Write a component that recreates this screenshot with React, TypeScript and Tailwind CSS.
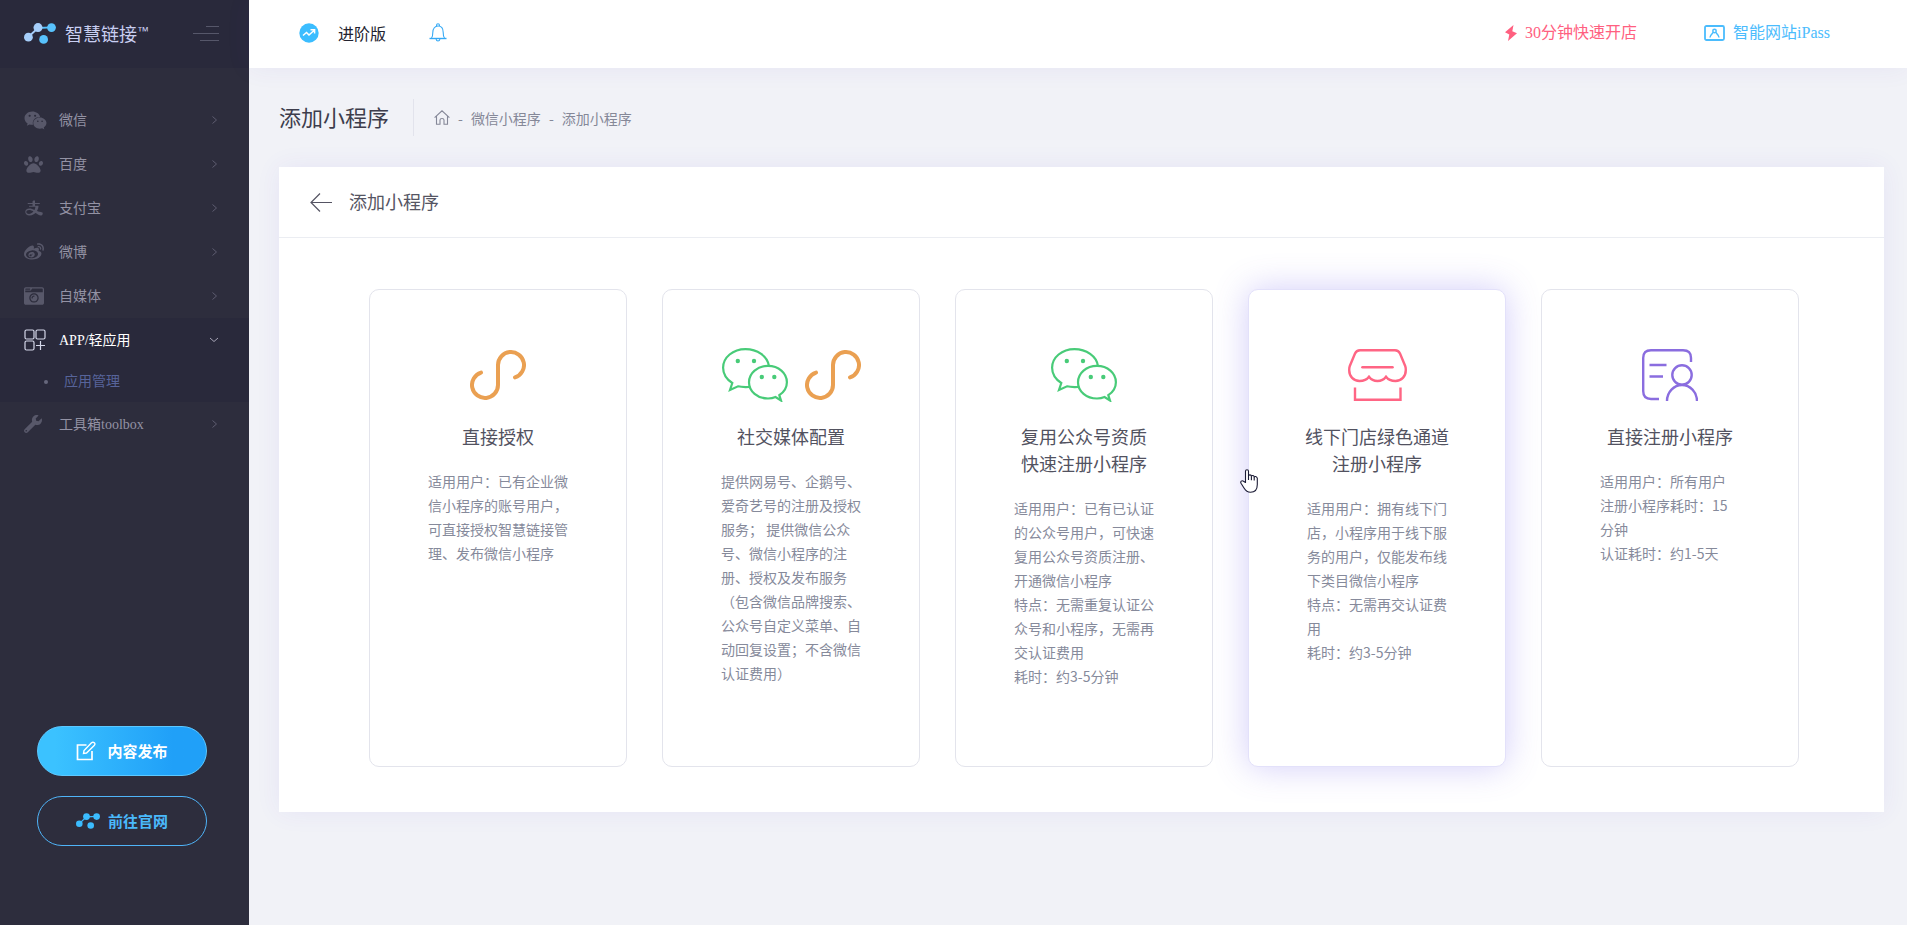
import type { ReactNode } from "react";
import { FaWeixin, FaPaw, FaWeibo, FaCameraRetro, FaWrench } from "react-icons/fa";
import { AiOutlineAlipay } from "react-icons/ai";
import clsx from "clsx";

function LogoMark({ className, left, right }: { className: string; left: string; right: string }) {
  return (
    <svg viewBox="0 0 32 21" className={className} aria-hidden="true">
      <path d="M4.3 14 L14 5" stroke={left} strokeWidth="1.8" />
      <path d="M14 5 L27.5 4.3" stroke={right} strokeWidth="1.8" />
      <circle cx="4.4" cy="14.2" r="4.4" fill={left} />
      <circle cx="14" cy="4.6" r="4.5" fill={left} />
      <circle cx="27.5" cy="4.6" r="4.4" fill={right} />
      <circle cx="19.6" cy="16.4" r="4.4" fill={right} />
    </svg>
  );
}

function GridPlusIcon({ className }: { className?: string }) {
  return (
    <svg viewBox="0 0 22 22" className={className} fill="none" stroke="currentColor" strokeWidth="1.2">
      <rect x="1" y="1" width="9" height="9" rx="1.5" />
      <rect x="12" y="1" width="9" height="9" rx="1.5" />
      <rect x="1" y="12" width="9" height="9" rx="1.5" />
      <path d="M16.5 12v9M12 16.5h9" />
    </svg>
  );
}

function Chevron({ open }: { open?: boolean }) {
  return (
    <svg
      viewBox="0 0 10 10"
      className={clsx("h-2.5 w-2.5", open ? "text-[#a5a3b5]" : "text-[#5d5c70]")}
      fill="none"
      stroke="currentColor"
      strokeWidth="1"
    >
      {open ? <path d="M1 3l4 3.5L9 3" /> : <path d="M3.500 1.500l4 3.500-4 3.500" />}
    </svg>
  );
}

function BellIcon() {
  return (
    <svg viewBox="0 0 18 19" className="h-[19px] w-[18px]" fill="none" stroke="#35a9f5" strokeWidth="1.1">
      <path d="M.5 15.5h17" strokeWidth="1.4" />
      <path d="M2.5 15c1-1.2 1.3-2.500 1.300-5.500C3.800 5.500 6 3 9 3s5.200 2.500 5.200 6.500c0 3 .3 4.300 1.300 5.500" />
      <path d="M7.600 3.100V2Q7.600.7 9 .7T10.400 2v1.100M7 15.700q.3 2.300 2 2.300t2-2.300" />
    </svg>
  );
}

function WechatIcon() {
  return (
    <svg viewBox="0 0 66 54" className="h-[54px] w-[66px]" fill="none" stroke="#48cb78" strokeWidth="2.200">
      <path d="M46.800 17.500C45.500 8.500 35.500 1.100 23.500 1.100C11 1.100 1.100 9.300 1.100 19.700C1.100 26 5 31.500 10.300 35L8 42L16 38.300C19.500 39.300 23 39.200 27.200 39" />
      <path d="M57.300 47.200C62 44 64.900 39.500 64.900 34.200C64.900 25 56.500 17.800 46 17.800S27 25 27 34.200C27 43.500 35.500 50.500 46 50.500C48.700 50.500 51.300 50 53.500 49L59 52.500Z" />
      <g fill="#48cb78" stroke="none">
        <circle cx="15.800" cy="13" r="2.200" />
        <circle cx="32" cy="13" r="2.200" />
        <circle cx="39.800" cy="29" r="2.200" />
        <circle cx="52.300" cy="29" r="2.200" />
      </g>
    </svg>
  );
}

function MiniProgramIcon() {
  return (
    <svg viewBox="0 0 56 50" className="h-[50px] w-14" fill="none" stroke="#eaa052" strokeWidth="4" strokeLinecap="round">
      <path d="M45 27.400A13 13 0 1 0 28 15V35A13 13 0 1 1 11 22.600" />
    </svg>
  );
}

function StoreIcon() {
  return (
    <svg viewBox="0 0 59 52" className="h-[52px] w-[59px]" fill="none" stroke="#ff6584" strokeWidth="2.400">
      <path d="M12 1.200H47Q50.500 1.200 52 4.500L57.200 17Q57.800 18.500 57.800 21C57.800 27.500 53.500 32 47.500 32C43.500 32 40 30.500 38 27.800C36 30.500 33 32 29.500 32S23 30.500 21 27.800C19 30.500 15.500 32 11.500 32C5.500 32 1.200 27.500 1.200 21Q1.200 18.500 1.800 17L7 4.500Q8.500 1.200 12 1.200Z" />
      <path d="M14.500 18.300h30" strokeWidth="2.600" strokeLinecap="round" />
      <path d="M7 38.500V50.800H52.500V38.500" />
    </svg>
  );
}

function RegisterIcon() {
  return (
    <svg viewBox="0 0 56 52" className="h-[52px] w-14" fill="none" stroke="#8a6ddf" strokeWidth="2.400">
      <path d="M49 13V9Q49 1.200 41 1.200H9Q1.200 1.200 1.200 9V42Q1.200 50 9 50H17" />
      <path d="M7.500 16h17M7.500 27.500h13.500" />
      <circle cx="40" cy="26" r="9.700" />
      <path d="M25 52C25 43 32 36 40 36S55 43 55 52" />
    </svg>
  );
}

function HandCursor() {
  return (
    <svg
      viewBox="0 0 18 24"
      className="pointer-events-none absolute -left-[9px] top-[179px] h-6 w-[18px]"
      fill="#fff"
      stroke="#1b1b35"
      strokeWidth="1.100"
      strokeLinejoin="round"
    >
      <path d="M5.500 13.500V2.200Q5.500.7 7 .7T8.500 2.200V7Q8.700 5.800 10 5.900T11.400 7.200Q11.800 6.300 12.900 6.500T14.200 8Q14.600 7.300 15.700 7.500T17.300 9.200V15.500C17.300 20.500 14.500 23.300 10.500 23.300C7 23.300 5.500 21.500 4 19L1 14.200Q.3 12.800 1.300 12.100T3.500 12.200Z" />
      <path d="M8.500 7v4M11.400 7.200v4M14.200 8v3.500" fill="none" />
    </svg>
  );
}

const menu = [
  { name: "微信", icon: FaWeixin, size: "h-[23px] w-[23px]" },
  { name: "百度", icon: FaPaw, size: "h-[19px] w-[19px]" },
  { name: "支付宝", icon: AiOutlineAlipay, size: "h-5 w-5" },
  { name: "微博", icon: FaWeibo, size: "h-5 w-5" },
  { name: "自媒体", icon: FaCameraRetro, size: "h-5 w-5" },
  { name: "APP/轻应用", icon: GridPlusIcon, size: "h-[22px] w-[22px]", active: true, children: ["应用管理"] },
  { name: "工具箱toolbox", icon: FaWrench, size: "h-[18px] w-[18px]" },
];

type Option = { title: string[]; lines: string[]; icons: ReactNode; active?: boolean };

const options: Option[] = [
  {
    title: ["直接授权"],
    lines: ["适用用户：已有企业微信小程序的账号用户，可直接授权智慧链接管理、发布微信小程序"],
    icons: <MiniProgramIcon />,
  },
  {
    title: ["社交媒体配置"],
    lines: [
      "提供网易号、企鹅号、爱奇艺号的注册及授权服务； 提供微信公众号、微信小程序的注册、授权及发布服务（包含微信品牌搜索、公众号自定义菜单、自动回复设置；不含微信认证费用）",
    ],
    icons: (
      <>
        <WechatIcon />
        <MiniProgramIcon />
      </>
    ),
  },
  {
    title: ["复用公众号资质", "快速注册小程序"],
    lines: [
      "适用用户：已有已认证的公众号用户，可快速复用公众号资质注册、开通微信小程序",
      "特点：无需重复认证公众号和小程序，无需再交认证费用",
      "耗时：约3-5分钟",
    ],
    icons: <WechatIcon />,
  },
  {
    title: ["线下门店绿色通道", "注册小程序"],
    lines: [
      "适用用户：拥有线下门店，小程序用于线下服务的用户，仅能发布线下类目微信小程序",
      "特点：无需再交认证费用",
      "耗时：约3-5分钟",
    ],
    icons: <StoreIcon />,
    active: true,
  },
  {
    title: ["直接注册小程序"],
    lines: ["适用用户：所有用户", "注册小程序耗时：15分钟", "认证耗时：约1-5天"],
    icons: <RegisterIcon />,
  },
];

function Sidebar() {
  return (
    <aside className="flex w-[249px] shrink-0 flex-col bg-[#2d2d3d]">
      <div className="flex h-[68px] items-center bg-[#29293b] pb-0.5 pl-6 pr-[30px]">
        <LogoMark className="h-[21px] w-8" left="#a6cefa" right="#58c2fd" />
        <div className="ml-[9px] flex text-[18px] leading-6 text-[#c9cff2]">
          智慧链接<span className="font-['Liberation_Sans'] text-xs leading-5">™</span>
        </div>
        <button type="button" aria-label="收起菜单" className="ml-auto flex flex-col items-end gap-1.5">
          <span className="h-px w-[13px] bg-[#56576a]" />
          <span className="h-px w-[26px] bg-[#56576a]" />
          <span className="h-px w-[19px] bg-[#56576a]" />
        </button>
      </div>

      <nav className="mt-[30px] flex-1 font-['Liberation_Serif','Noto_Sans_CJK_SC',serif] text-sm">
        {menu.map(item => (
          <div key={item.name} className={clsx(item.active && "bg-[#29293b]")}>
            <a
              href="#"
              className={clsx("flex h-11 items-center pl-6 pr-[30px]", item.active ? "text-white" : "text-[#9392a4]")}
            >
              <span className="flex w-[35px] shrink-0">
                <item.icon className={clsx(item.size, item.active ? "text-[#d5d8ea]" : "text-[#58586a]")} />
              </span>
              <span className="flex-1 pt-0.5">{item.name}</span>
              <Chevron open={item.active} />
            </a>
            {item.children?.map(child => (
              <a key={child} href="#" className="flex h-10 items-center pl-11 text-[#57649a]">
                <span className="mr-4 h-1 w-1 rounded-full bg-[#66677c]" />
                {child}
              </a>
            ))}
          </div>
        ))}
      </nav>

      <div className="flex flex-col gap-5 pb-[79px] pl-[37px] pr-[42px] text-[15px] font-bold">
        <button
          type="button"
          className="flex h-[50px] items-center justify-center gap-[11px] rounded-full border border-[#5cc8ff] bg-linear-to-r from-[#3bc2ff] from-10% to-[#20a0f8] to-80% text-white"
        >
          <svg viewBox="0 0 20 20" className="h-5 w-5" fill="none" stroke="currentColor" strokeWidth="1.700">
            <path d="M10.500 4H1.500V18.500H16V10" />
            <path d="M7.500 12.500L8 9.500L15.500 1.700Q17 .6 18.300 1.800T18.200 4.400L10.500 12Z" strokeWidth="1.400" />
          </svg>
          内容发布
        </button>
        <button
          type="button"
          className="flex h-[50px] items-center justify-center gap-2 rounded-full border border-[#4fb4f9] text-[#4ab9fb]"
        >
          <LogoMark className="h-4 w-6" left="#3bbcff" right="#3bbcff" />
          前往官网
        </button>
      </div>
    </aside>
  );
}

function TopBar() {
  return (
    <header className="relative flex h-[68px] items-center bg-white pb-0.5 pl-[50px] pr-[77px] shadow-[0_0_26px_rgba(82,63,180,0.07)]">
      <svg viewBox="0 0 20 20" className="h-5 w-5" aria-hidden="true">
        <circle cx="10" cy="10" r="9.700" fill="#3bbdff" />
        <path d="M4 12.500l3.500-3 2.500 2.500 5-4.500M11.500 6.800H15.600V10.500" fill="none" stroke="#fff" strokeWidth="1.500" />
      </svg>
      <span className="ml-[19px] text-base text-[#22222e]">进阶版</span>
      <button type="button" aria-label="通知" className="ml-[43px] pb-0.5">
        <BellIcon />
      </button>
      <div className="ml-auto flex gap-[67px] font-['Liberation_Serif','Noto_Sans_CJK_SC',serif] text-base">
        <a href="#" className="flex items-center gap-2 text-[#ff6080]">
          <svg viewBox="0 0 12 16" className="h-4 w-3" fill="currentColor">
            <path d="M8.500 0L0 7.200L4.300 9.500L3 16L12 8.300L7.300 6.200Z" />
          </svg>
          30分钟快速开店
        </a>
        <a href="#" className="flex items-center gap-2 text-[#4bbcfd]">
          <svg viewBox="0 0 21 16" className="h-4 w-[21px]" fill="none" stroke="currentColor" strokeWidth="1.800">
            <rect x="1" y="1" width="19" height="14" rx="1.500" />
            <circle cx="10.500" cy="6" r="1.700" strokeWidth="1.500" />
            <path d="M6 12.500Q6.200 10.500 9.300 7.200M15 12.500Q14.800 10.500 11.700 7.200" strokeWidth="1.500" />
          </svg>
          智能网站iPass
        </a>
      </div>
    </header>
  );
}

function OptionCard({ option }: { option: Option }) {
  return (
    <a
      href="#"
      className={clsx(
        "relative flex min-h-[478px] flex-1 flex-col items-center rounded-[10px] border bg-white pb-10 pt-[55px]",
        option.active ? "border-[#e3e1fa] shadow-[0_0_34px_rgba(105,90,235,0.30)]" : "border-[#e3e4ec]"
      )}
    >
      <div className="flex h-[60px] items-center justify-center gap-[17px]">{option.icons}</div>
      <h3 className="mt-[18px] text-center text-[18px] leading-[27px] text-[#52525f]">
        {option.title.map(line => (
          <span key={line} className="block">{line}</span>
        ))}
      </h3>
      <div className="mt-[19px] w-[140px] text-sm leading-6 text-[#868a9b]">
        {option.lines.map(line => (
          <p key={line}>{line}</p>
        ))}
      </div>
      {option.active && <HandCursor />}
    </a>
  );
}

export default function App() {
  return (
    <div className="flex min-h-screen bg-[#f1f2f7] font-['Noto_Sans_CJK_SC',sans-serif]">
      <Sidebar />
      <div className="flex min-w-0 flex-1 flex-col">
        <TopBar />
        <main className="pl-[30px] pr-[23px]">
          <div className="flex h-[99px] items-center">
            <h1 className="pb-1 text-[22px] leading-8 text-[#3d3d4c]">添加小程序</h1>
            <div className="ml-6 flex h-[37px] items-center gap-2 border-l border-[#e2e3ec] pl-5 text-sm text-[#858898]">
              <a href="#" aria-label="首页">
                <svg viewBox="0 0 16 15" className="h-[15px] w-4" fill="none" stroke="currentColor" strokeWidth="1.100">
                  <path d="M.6 7.600L8 .8L15.400 7.600M2.500 6.200V14.300H6V10Q6 8.500 8 8.500T10 10V14.300H13.500V6.200" />
                </svg>
              </a>
              <span>-</span>
              <a href="#">微信小程序</a>
              <span>-</span>
              <span>添加小程序</span>
            </div>
          </div>

          <section className="bg-white shadow-[0_0_24px_rgba(82,63,220,0.07)]">
            <div className="flex h-[71px] items-center gap-[17px] border-b border-[#ebedf2] pl-[31px]">
              <button type="button" aria-label="返回">
                <svg viewBox="0 0 22 19" className="h-[19px] w-[22px]" fill="none" stroke="#555463" strokeWidth="1.200">
                  <path d="M22 9.500H1M10 .5L1 9.500L10 18.500" />
                </svg>
              </button>
              <h2 className="pb-0.5 text-[18px] leading-7 text-[#555563]">添加小程序</h2>
            </div>
            <div className="flex gap-[35px] pb-[45px] pl-[90px] pr-[85px] pt-[51px]">
              {options.map(option => (
                <OptionCard key={option.title[0]} option={option} />
              ))}
            </div>
          </section>
        </main>
      </div>
    </div>
  );
}
